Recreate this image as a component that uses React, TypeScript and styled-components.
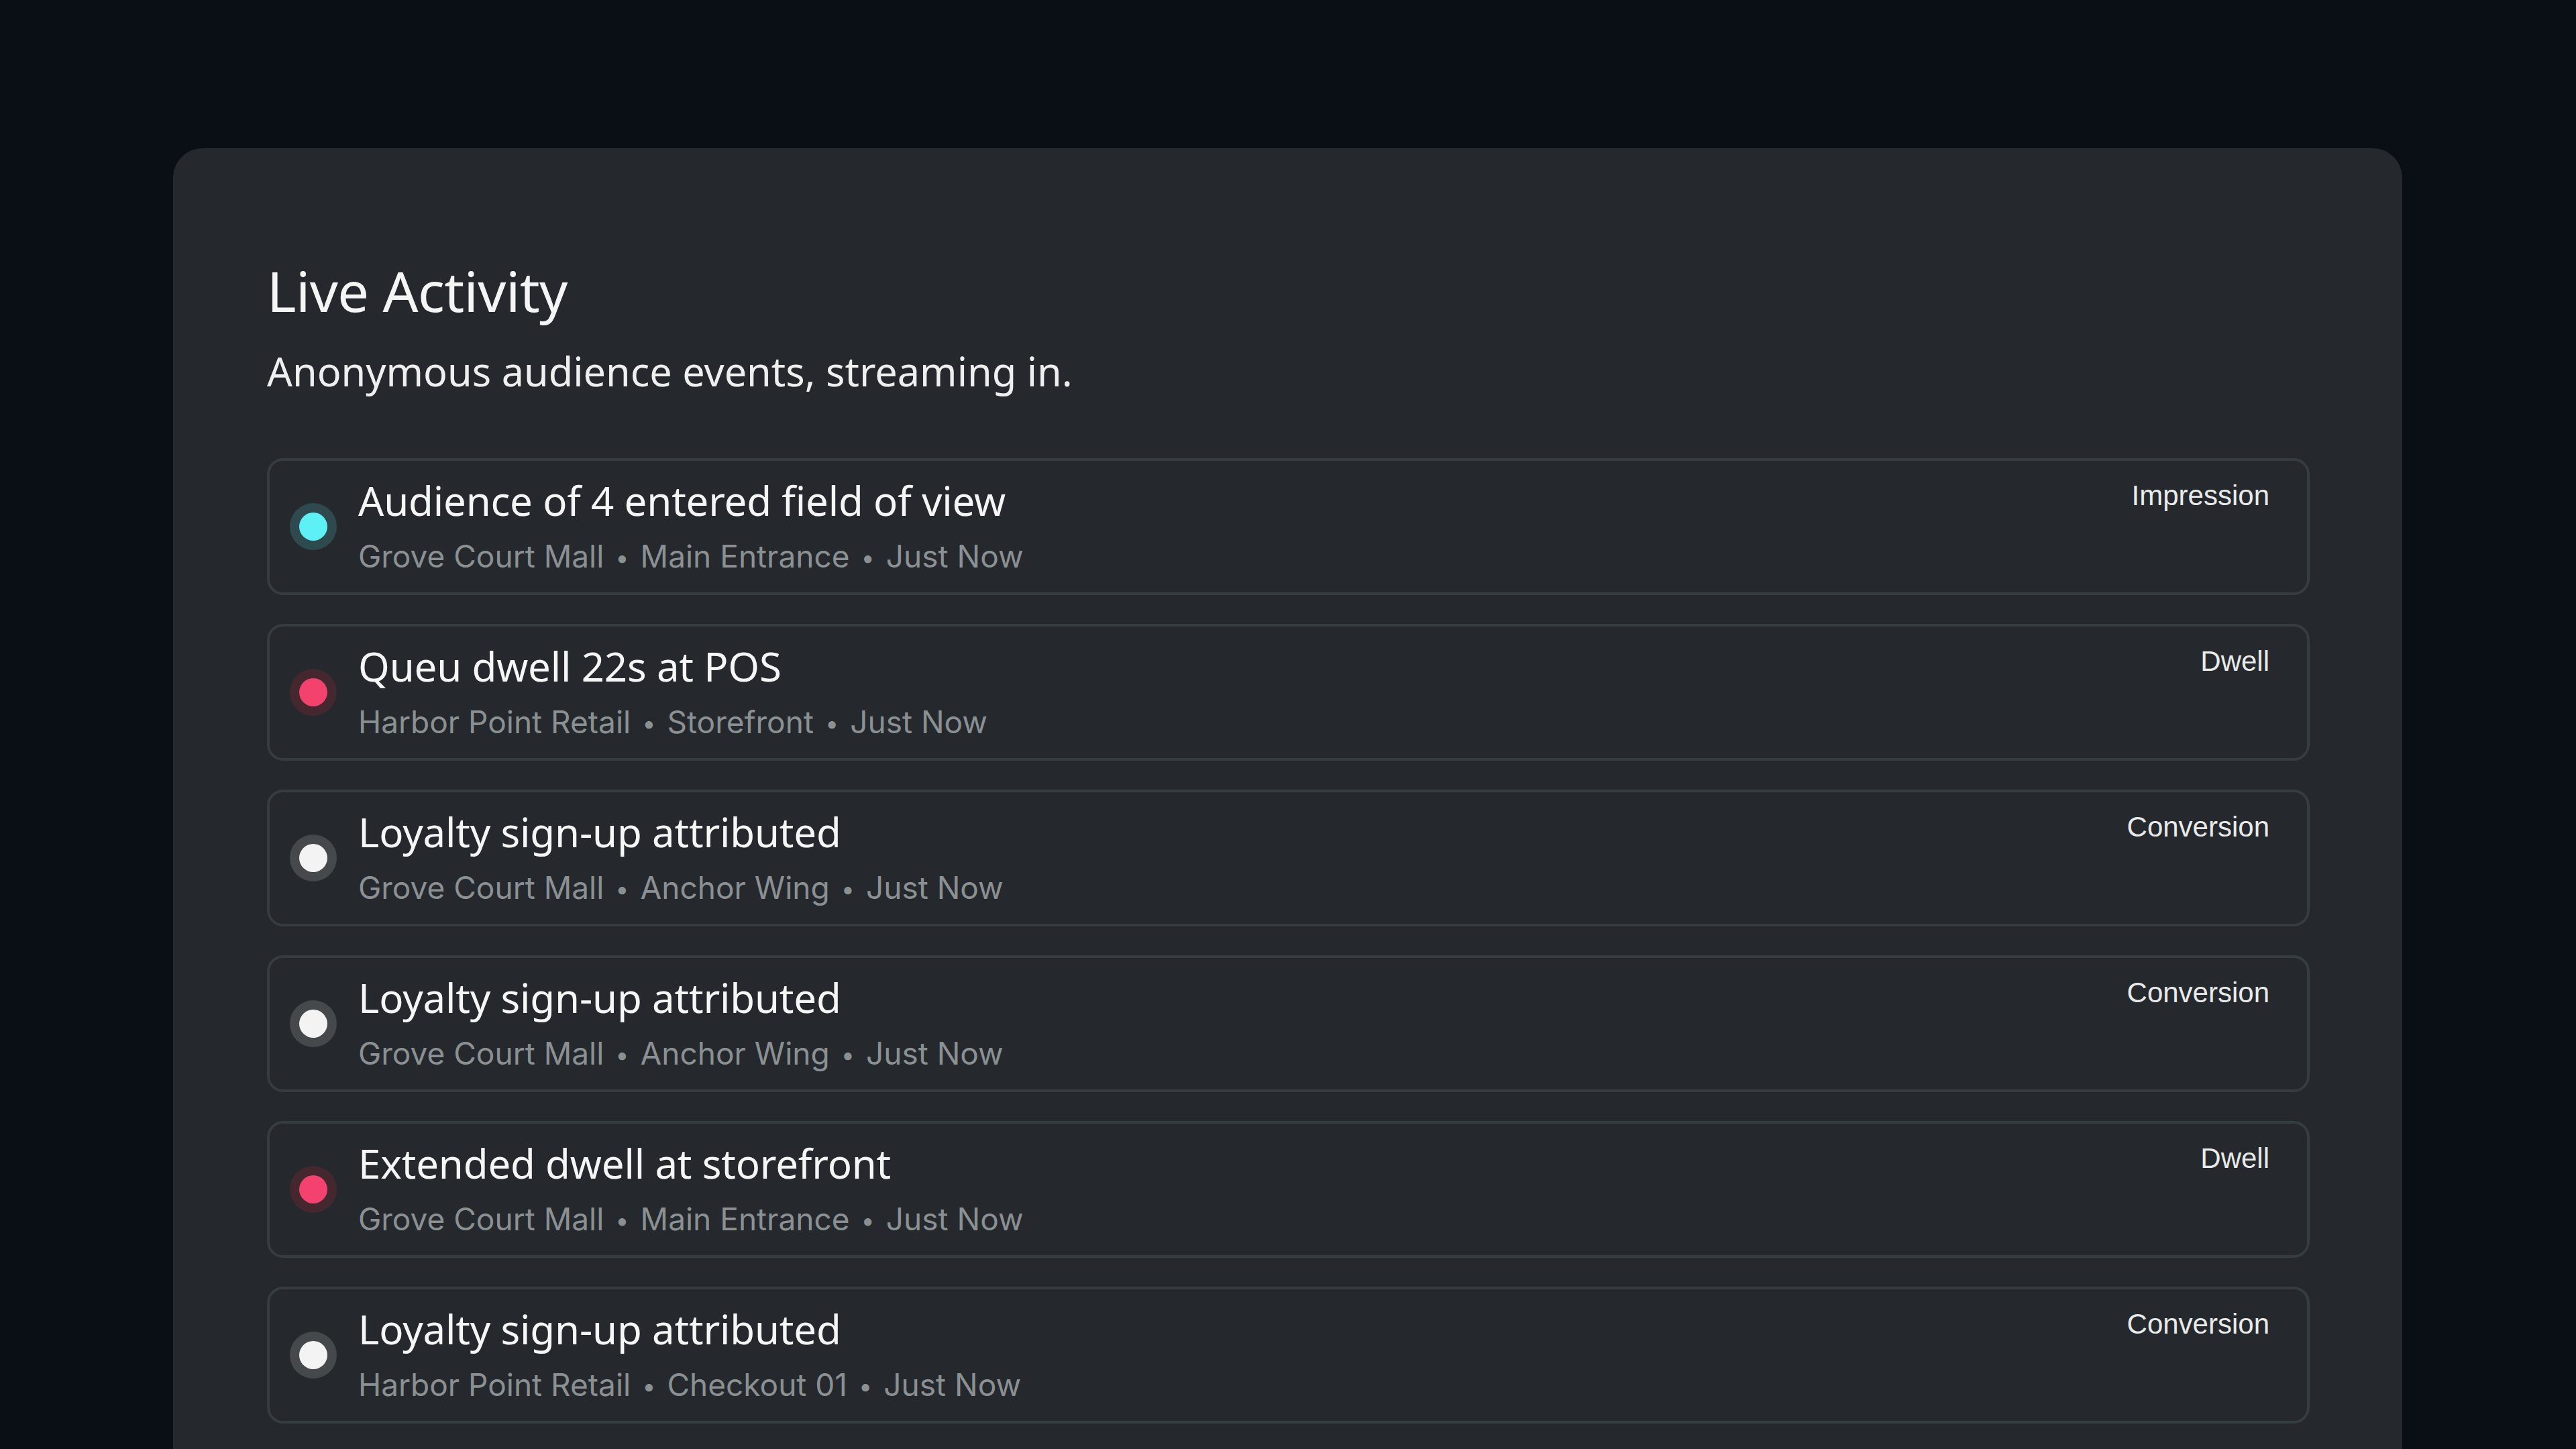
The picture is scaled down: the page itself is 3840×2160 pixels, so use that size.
import styled, { createGlobalStyle } from "styled-components";

type Tone = "cyan" | "red" | "white";

const tones: Record<Tone, { dot: string; ring: string }> = {
  cyan: { dot: "#5df0f4", ring: "#2e4a4e" },
  red: { dot: "#f2426d", ring: "#44272f" },
  white: { dot: "#f3f3f3", ring: "#46494c" },
};

const events: {
  tone: Tone;
  title: string;
  place: string;
  zone: string;
  when: string;
  kind: string;
}[] = [
  {
    tone: "cyan",
    title: "Audience of 4 entered field of view",
    place: "Grove Court Mall",
    zone: "Main Entrance",
    when: "Just Now",
    kind: "Impression",
  },
  {
    tone: "red",
    title: "Queu dwell 22s at POS",
    place: "Harbor Point Retail",
    zone: "Storefront",
    when: "Just Now",
    kind: "Dwell",
  },
  {
    tone: "white",
    title: "Loyalty sign-up attributed",
    place: "Grove Court Mall",
    zone: "Anchor Wing",
    when: "Just Now",
    kind: "Conversion",
  },
  {
    tone: "white",
    title: "Loyalty sign-up attributed",
    place: "Grove Court Mall",
    zone: "Anchor Wing",
    when: "Just Now",
    kind: "Conversion",
  },
  {
    tone: "red",
    title: "Extended dwell at storefront",
    place: "Grove Court Mall",
    zone: "Main Entrance",
    when: "Just Now",
    kind: "Dwell",
  },
  {
    tone: "white",
    title: "Loyalty sign-up attributed",
    place: "Harbor Point Retail",
    zone: "Checkout 01",
    when: "Just Now",
    kind: "Conversion",
  },
];

const App = () => {
  return (
    <>
      <GlobalStyle />
      <Page>
        <Card>
          <Title>Live Activity</Title>
          <Subtitle>Anonymous audience events, streaming in.</Subtitle>
          <List>
            {events.map((ev, i) => (
              <Row key={i}>
                <Dot $tone={ev.tone} />
                <TextCol>
                  <EventTitle>{ev.title}</EventTitle>
                  <Meta>
                    {ev.place}
                    <Sep>•</Sep>
                    {ev.zone}
                    <Sep>•</Sep>
                    {ev.when}
                  </Meta>
                </TextCol>
                <Kind>{ev.kind}</Kind>
              </Row>
            ))}
          </List>
        </Card>
      </Page>
    </>
  );
};

const GlobalStyle = createGlobalStyle`
  html, body {
    margin: 0;
    padding: 0;
    background: #0a0e15;
    overflow: hidden;
  }
  body {
    width: 3840px;
    height: 2160px;
    font-family: "Noto Sans", "Open Sans", sans-serif;
  }
`;

const Page = styled.div`
  box-sizing: border-box;
  width: 3840px;
  height: 2160px;
  padding: 221px 259px 0 258px;
  overflow: hidden;
`;

const Card = styled.section`
  box-sizing: border-box;
  background: #25292d;
  border-radius: 44px;
  padding: 162px 138px 140px 140px;
`;

const Title = styled.h1`
  margin: 0;
  font-family: "Noto Sans", "Open Sans", sans-serif;
  font-size: 83px;
  font-weight: 400;
  line-height: 1.2;
  color: #f4f5f5;
  letter-spacing: -0.6px;
`;

const Subtitle = styled.p`
  margin: 35px 0 0;
  font-family: "Noto Sans", "Open Sans", sans-serif;
  font-size: 59.4px;
  font-weight: 400;
  line-height: 1.2;
  color: #eef0f0;
`;

const List = styled.div`
  display: flex;
  flex-direction: column;
  gap: 43px;
  margin-top: 94px;
`;

const Row = styled.div`
  box-sizing: border-box;
  height: 204px;
  display: flex;
  align-items: center;
  padding: 0 56px 0 44px;
  border: 4px solid #363d40;
  border-radius: 24px;
  background: #25292d;
`;

const Dot = styled.span<{ $tone: Tone }>`
  flex: none;
  width: 42px;
  height: 42px;
  border-radius: 50%;
  background: ${(p) => tones[p.$tone].dot};
  box-shadow: 0 0 0 14px ${(p) => tones[p.$tone].ring};
  margin-right: 46px;
`;

const TextCol = styled.div`
  flex: 1;
  align-self: flex-start;
  display: flex;
  flex-direction: column;
  gap: 20px;
  padding-top: 23px;
  min-width: 0;
`;

const EventTitle = styled.div`
  font-family: "Noto Sans", "Open Sans", sans-serif;
  font-size: 60px;
  line-height: 1.2;
  letter-spacing: -0.2px;
  color: #f5f6f6;
  white-space: nowrap;
`;

const Meta = styled.div`
  font-family: Inter, "Noto Sans", sans-serif;
  font-size: 46px;
  line-height: 1.2;
  color: #8b9093;
  white-space: nowrap;
`;

const Sep = styled.span`
  margin: 0 17px;
  font-size: 36px;
  vertical-align: 2px;
`;

const Kind = styled.span`
  flex: none;
  align-self: flex-start;
  margin-top: 27px;
  font-family: "Liberation Sans", Arial, sans-serif;
  font-size: 42px;
  line-height: 1.2;
  color: #e9eaea;
`;

export default App;
